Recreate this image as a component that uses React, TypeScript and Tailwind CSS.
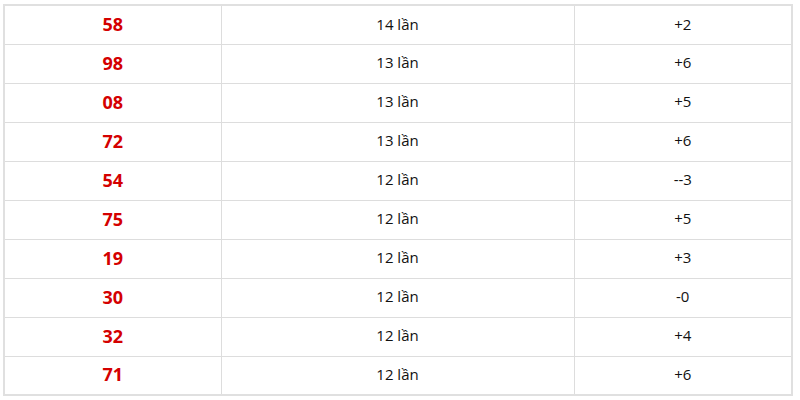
const rows = [
  { num: "58", count: "14 lần", diff: "+2" },
  { num: "98", count: "13 lần", diff: "+6" },
  { num: "08", count: "13 lần", diff: "+5" },
  { num: "72", count: "13 lần", diff: "+6" },
  { num: "54", count: "12 lần", diff: "--3" },
  { num: "75", count: "12 lần", diff: "+5" },
  { num: "19", count: "12 lần", diff: "+3" },
  { num: "30", count: "12 lần", diff: "-0" },
  { num: "32", count: "12 lần", diff: "+4" },
  { num: "71", count: "12 lần", diff: "+6" },
];

export default function App() {
  return (
    <div className="w-[800px] h-[400px] bg-white pt-1 pl-[3px] font-['Open_Sans',sans-serif]">
      <table className="w-[790px] border-collapse border-2 border-[#e0e0e0]">
        <tbody>
          {rows.map((r) => (
            <tr key={r.num} className="h-[39px]">
              <td className="w-[217px] border border-[#dddddd] text-center text-[18px] font-bold text-[#d40000] p-0 pb-px">
                {r.num}
              </td>
              <td className="w-[353px] border border-[#dddddd] text-center text-[15px] text-[#111] p-0 pb-0.5">
                {r.count}
              </td>
              <td className="border border-[#dddddd] text-center text-[15px] text-[#111] p-0 pb-0.5">
                {r.diff}
              </td>
            </tr>
          ))}
        </tbody>
      </table>
    </div>
  );
}
